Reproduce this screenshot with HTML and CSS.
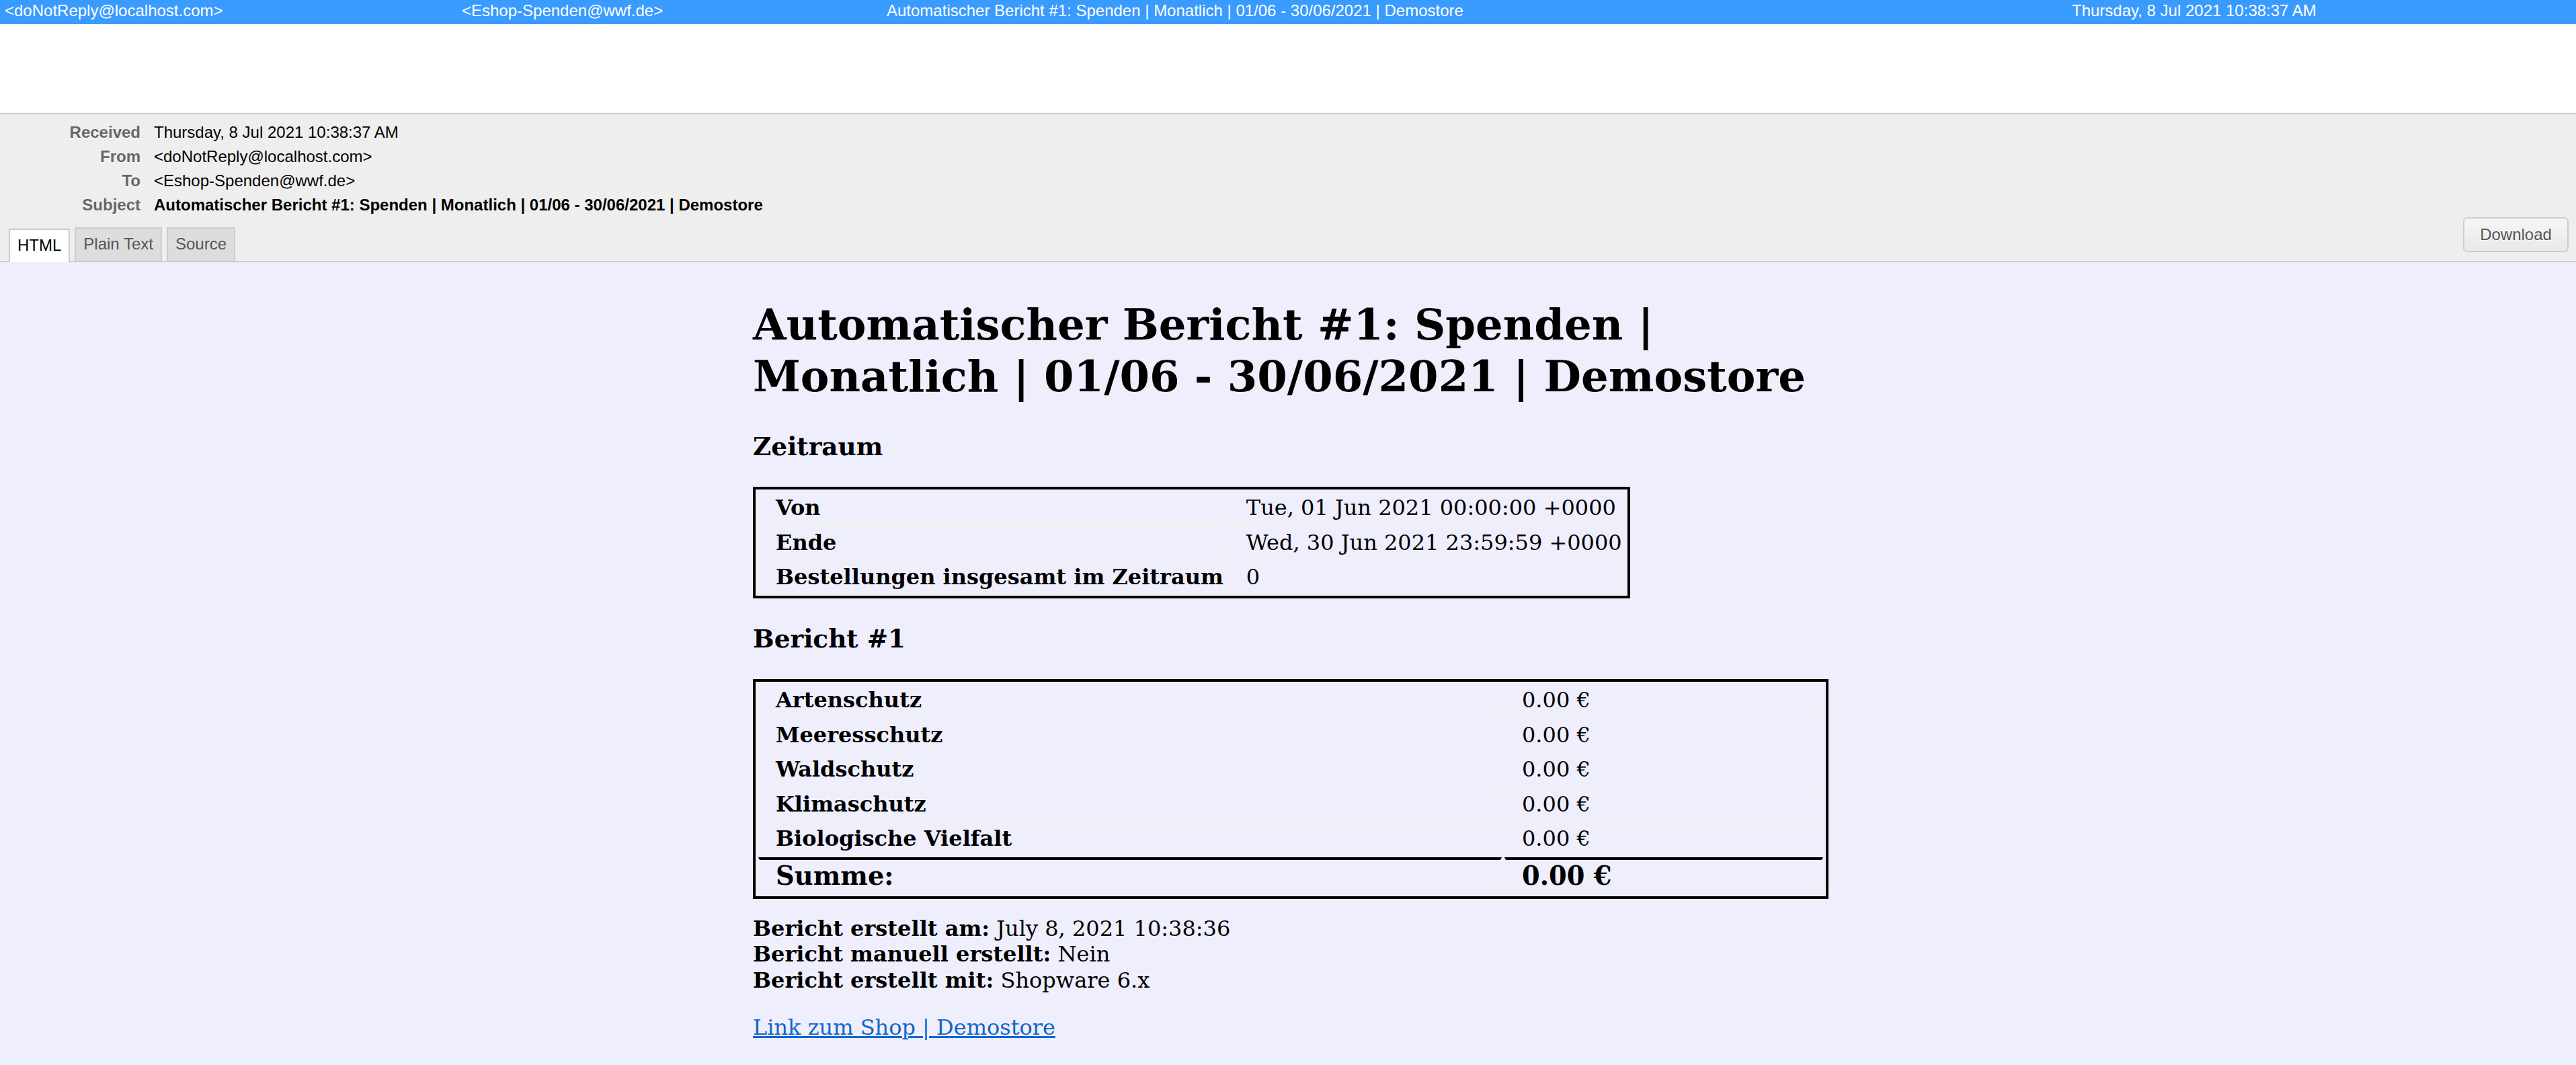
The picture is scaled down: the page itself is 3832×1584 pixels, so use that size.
FILE: index.html
```html
<!DOCTYPE html>
<html lang="de">
<head>
<meta charset="utf-8">
<title>MailHog</title>
<link rel="stylesheet" href="styles.css">
</head>
<body>
<div class="app">
  <div class="msg-row">
    <span class="cell">&lt;doNotReply@localhost.com&gt;</span>
    <span class="cell">&lt;Eshop-Spenden@wwf.de&gt;</span>
    <span class="cell">Automatischer Bericht #1: Spenden | Monatlich | 01/06 - 30/06/2021 | Demostore</span>
    <span class="cell">Thursday, 8 Jul 2021 10:38:37 AM</span>
  </div>
  <div class="list-space"></div>
  <div class="preview-head">
    <dl class="meta">
      <dt>Received</dt><dd>Thursday, 8 Jul 2021 10:38:37 AM</dd>
      <dt>From</dt><dd>&lt;doNotReply@localhost.com&gt;</dd>
      <dt>To</dt><dd>&lt;Eshop-Spenden@wwf.de&gt;</dd>
      <dt>Subject</dt><dd class="subject">Automatischer Bericht #1: Spenden | Monatlich | 01/06 - 30/06/2021 | Demostore</dd>
    </dl>
    <div class="tabbar">
      <ul class="tabs">
        <li class="tab active">HTML</li>
        <li class="tab">Plain Text</li>
        <li class="tab">Source</li>
      </ul>
      <button class="download" type="button">Download</button>
    </div>
  </div>
  <div class="mail-body">
    <div class="mail">
      <h1>Automatischer Bericht #1: Spenden | Monatlich | 01/06 - 30/06/2021 | Demostore</h1>
      <h3>Zeitraum</h3>
      <table class="grid period">
        <tr><th>Von</th><td>Tue, 01 Jun 2021 00:00:00 +0000</td></tr>
        <tr><th>Ende</th><td>Wed, 30 Jun 2021 23:59:59 +0000</td></tr>
        <tr><th>Bestellungen insgesamt im Zeitraum</th><td>0</td></tr>
      </table>
      <h3>Bericht #1</h3>
      <table class="grid report">
        <tr><th class="label">Artenschutz</th><td>0.00 €</td></tr>
        <tr><th class="label">Meeresschutz</th><td>0.00 €</td></tr>
        <tr><th class="label">Waldschutz</th><td>0.00 €</td></tr>
        <tr><th class="label">Klimaschutz</th><td>0.00 €</td></tr>
        <tr><th class="label">Biologische Vielfalt</th><td>0.00 €</td></tr>
        <tr class="sum"><th class="label">Summe:</th><td>0.00 €</td></tr>
      </table>
      <p class="info"><b>Bericht erstellt am:</b> July 8, 2021 10:38:36<br><b>Bericht manuell erstellt:</b> Nein<br><b>Bericht erstellt mit:</b> Shopware 6.x</p>
      <p class="shop"><a href="#">Link zum Shop | Demostore</a></p>
    </div>
  </div>
</div>
</body>
</html>
```

FILE: styles.css
```css
html, body {
  margin: 0;
  padding: 0;
  height: 100%;
}

body {
  overflow: hidden;
  background: #fff;
  font-family: "Liberation Sans", Arial, sans-serif;
}

.app {
  display: flex;
  flex-direction: column;
  height: 1584px;
}

/* selected message row */
.msg-row {
  box-sizing: border-box;
  display: grid;
  grid-template-columns: 680px 632px 1763px 1fr;
  height: 36px;
  padding-top: 2px;
  background: #3a9bff;
  color: #fff;
  font-size: 24px;
  line-height: 27px;
}

.msg-row .cell {
  padding-left: 7px;
  white-space: nowrap;
  overflow: hidden;
}

.list-space {
  height: 132px;
  background: #fff;
  border-bottom: 2px solid #ccc;
}

/* preview header */
.preview-head {
  background: #eee;
  padding-top: 9px;
}

.meta {
  display: grid;
  grid-template-columns: 209px 1fr;
  column-gap: 20px;
  margin: 0;
  font-size: 24px;
  line-height: 36px;
}

.meta dt {
  text-align: right;
  font-weight: bold;
  color: #666;
  text-shadow: 0 1px 0 #fff;
}

.meta dd {
  margin: 0;
  color: #000;
  white-space: nowrap;
}

.meta .subject {
  font-weight: bold;
}

.tabbar {
  display: flex;
  justify-content: space-between;
  align-items: flex-end;
  padding: 0 11px 0 13px;
  border-bottom: 2px solid #ccc;
}

.tabs {
  display: flex;
  align-items: flex-end;
  gap: 7px;
  list-style: none;
  margin: 0;
  padding: 0;
}

.tab {
  box-sizing: border-box;
  height: 50px;
  padding: 9px 11px 0;
  border: 2px solid #ccc;
  border-bottom: 0;
  background: #ddd;
  color: #555;
  font-size: 24px;
  line-height: 28px;
}

.tab.active {
  background: #fff;
  color: #000;
  margin-bottom: -2px;
}

.download {
  box-sizing: border-box;
  width: 157px;
  height: 52px;
  margin: 0 0 13px;
  padding: 0;
  border: 2px solid #ccc;
  border-radius: 6px;
  background: linear-gradient(#f6f6f6, #e9e9e9);
  color: #555;
  font-family: "Liberation Sans", Arial, sans-serif;
  font-size: 24px;
  text-shadow: 0 1px 0 #fff;
}

/* rendered email */
.mail-body {
  flex: 1;
  background: #eeeefc;
  padding-left: 8px;
  overflow: hidden;
  font-family: "DejaVu Serif", serif;
  font-size: 32px;
  line-height: 1.2;
  color: #000;
}

.mail {
  width: 1600px;
  margin: 0 auto;
  padding-top: 12px;
}

.mail h1 {
  font-size: 64px;
  line-height: 1.2;
  margin: 43px 0;
}

.mail h3 {
  font-size: 37.44px;
  line-height: 1.2;
  margin: 37.44px 0;
}

.grid {
  border-collapse: separate;
  border-spacing: 4px;
  border: 4px solid #000;
}

.grid th,
.grid td {
  padding: 2.5px 2px 2.5px 24px;
  border: 2px solid #f0f0f2;
  text-align: left;
  white-space: nowrap;
}

.grid th {
  font-weight: bold;
}

.grid td {
  font-weight: normal;
}

.report {
  width: 100%;
}

.report .label {
  width: 70%;
}

.report .sum th,
.report .sum td {
  padding-top: 1px;
  padding-bottom: 1px;
  border-top: 4px solid #000;
  font-size: 38.4px;
  font-weight: bold;
}

.info {
  margin: 25px 0 32px;
}

.shop {
  margin: 0;
}

.shop a {
  color: #1166cc;
  text-decoration: underline;
}
```
